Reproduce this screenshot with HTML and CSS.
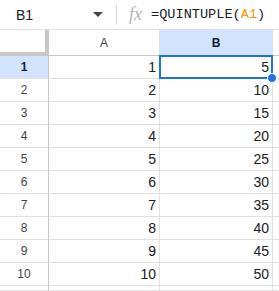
FILE: index.html
```html
<!DOCTYPE html>
<html>
<head>
  <title>Sheet</title>
  <link rel="stylesheet" href="styles.css">
</head>
<body>
  <!-- Formula bar -->
  <div class="formula-bar">
    <div class="name-box">B1</div>
    <svg class="caret" width="10" height="6" viewBox="0 0 10 6"><path d="M0 0 L10 0 L5 5 Z" fill="#444"/></svg>
    <div class="divider"></div>
    <span class="fx">fx</span>
    <div class="formula">=QUINTUPLE(<span class="ref">A1</span>)</div>
  </div>

  <!-- Grid -->
  <div class="grid" id="grid">
    <div class="corner"></div>
    <div class="col-head">A</div>
    <div class="col-head active">B</div>
    <div class="col-head rest"></div>
  </div>

  <script>
    const grid = document.getElementById('grid');
    for (let i = 1; i <= 11; i++) {
      const rh = document.createElement('div');
      rh.className = 'row-head' + (i === 1 ? ' active' : '');
      rh.textContent = i <= 10 ? i : '';
      grid.appendChild(rh);

      const a = document.createElement('div');
      a.className = 'cell';
      a.textContent = i <= 10 ? i : '';
      grid.appendChild(a);

      const b = document.createElement('div');
      b.className = 'cell' + (i === 1 ? ' selected' : '');
      b.textContent = i <= 10 ? i * 5 : '';
      if (i === 1) {
        const dot = document.createElement('span');
        dot.className = 'handle';
        b.appendChild(dot);
      }
      grid.appendChild(b);

      const c = document.createElement('div');
      c.className = 'cell rest';
      grid.appendChild(c);
    }
  </script>
</body>
</html>
```

FILE: styles.css
```css
body {
  margin: 0;
  height: 291px;
  font-family: "Liberation Sans", Arial, sans-serif;
  background-color: #fff;
  overflow: hidden;
}
.formula-bar {
  height: 29px;
  display: flex;
  align-items: center;
  border-bottom: 1px solid #e1e1e1;
}
.name-box {
  width: 78px;
  padding-left: 16px;
  font-size: 14px;
  color: #202124;
}
.caret {
  margin-left: -1px;
}
.divider {
  width: 1px;
  height: 20px;
  background-color: #dadce0;
  margin-left: 13px;
}
.fx {
  font-family: "Liberation Serif", serif;
  font-style: italic;
  font-size: 18px;
  color: #b4b4b4;
  margin-left: 12px;
}
.formula {
  margin-left: 9px;
  font-family: "Liberation Mono", monospace;
  font-size: 13.6px;
  color: #202124;
}
.ref {
  color: #f29900;
}
.grid {
  display: grid;
  grid-template-columns: 49px 111px 113px 6px;
  grid-template-rows: 26px repeat(10, 23px) 5px;
}
.corner {
  background-color: #fff;
  border-right: 4px solid #c7c7c7;
  border-bottom: 4px solid #c7c7c7;
}
.col-head {
  display: flex;
  align-items: center;
  justify-content: center;
  font-size: 12px;
  color: #444;
  border-right: 1px solid #e1e1e1;
  border-bottom: 1px solid #c4c7c5;
}
.col-head.active {
  background-color: #d3e3fd;
  color: #0b1f3f;
  font-weight: bold;
}
.row-head {
  display: flex;
  align-items: center;
  justify-content: center;
  font-size: 12px;
  color: #444;
  border-right: 1px solid #c4c7c5;
  border-bottom: 1px solid #e1e1e1;
}
.row-head.active {
  background-color: #d3e3fd;
  color: #0b1f3f;
  font-weight: bold;
}
.cell {
  position: relative;
  display: flex;
  align-items: center;
  justify-content: flex-end;
  padding-right: 3px;
  font-size: 14px;
  color: #202124;
  border-right: 1px solid #e1e1e1;
  border-bottom: 1px solid #e1e1e1;
}
.rest {
  padding: 0;
  border-right: none;
}
.cell.selected {
  z-index: 2;
  border: 2px solid #1a73e8;
  margin: -1px 0 0 -1px;
  padding-right: 2px;
}
.handle {
  position: absolute;
  right: -6px;
  bottom: -6px;
  width: 8px;
  height: 8px;
  border-radius: 50%;
  background-color: #1a73e8;
  border: 1px solid #fff;
  z-index: 3;
}
```
